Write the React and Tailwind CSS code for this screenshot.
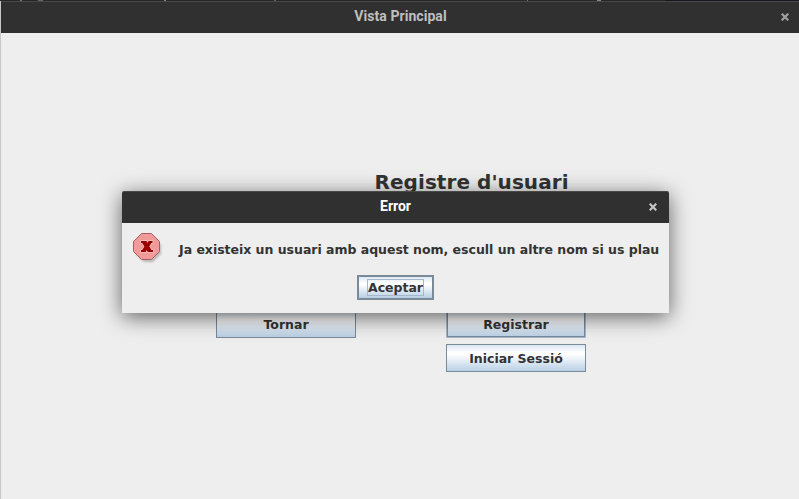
function CloseIcon({ className }) {
  return (
    <svg className={className} width="8" height="8" viewBox="0 0 8 8" fill="none" stroke="currentColor" strokeWidth="2.2">
      <path d="M0.7 0.7 7.3 7.3M7.3 0.7 0.7 7.3" />
    </svg>
  );
}

function ErrorIcon() {
  return (
    <svg width="32" height="32" viewBox="0 0 32 32" className="shrink-0">
      <path d="M12 5h9l8 8v9l-8 8h-9l-8-8v-9z" fill="#000" opacity="0.22" style={{ filter: "blur(1.2px)" }} />
      <path d="M9.500 1.500h10l8 8v10l-8 8h-10l-8-8v-10z" fill="#f19a9a" stroke="#a65f61" />
      <path
        d="M9 9h5.500l1 2 1-2H20.500v2H19.300L17.300 14.500l2.200 3.500H21v2H15.800l-1.100-2-1.100 2H9v-2h1.200l2.200-3.500L10.200 11H9z"
        fill="#990000"
        stroke="#ffc4c4"
        strokeWidth="1.4"
        paintOrder="stroke"
      />
    </svg>
  );
}

function Button({ children, className = "border-[#7a8a99]" }) {
  return (
    <button
      className={`h-7 w-[140px] border bg-[linear-gradient(to_bottom,#dde8f3_0%,#ffffff_30%,#ffffff_36%,#b8cfe5_100%)] pt-0.5 text-[12.5px] leading-none ${className}`}
    >
      {children}
    </button>
  );
}

function TitleBar({ title, titleClass, closeClass, className = "" }) {
  return (
    <div className={`grid h-8 grid-cols-[1fr_auto_1fr] border-t border-[#484848] bg-[#303030] font-[Roboto] text-[14px] font-bold leading-[28px] ${className}`}>
      <span />
      <span className={titleClass}>{title}</span>
      <CloseIcon className={closeClass} />
    </div>
  );
}

export default function App() {
  return (
    <div className="relative h-[499px] w-[799px] overflow-hidden bg-[#eeeeee] font-['DejaVu_Sans',sans-serif] font-bold text-[#333333]">
      <div className="flex h-px bg-[#272727]">
        <i className="ml-5 w-0.5 bg-[#77736a]" />
        <i className="ml-4 w-[5px] bg-[#666]" />
        <i className="ml-[121px] w-0.5 bg-[#888]" />
        <i className="ml-[108px] w-0.5 bg-[#666]" />
        <i className="ml-[251px] w-px bg-[#777]" />
        <i className="ml-[69px] w-1 bg-[#888]" />
        <i className="ml-auto w-[134px] bg-[#15151f]" />
      </div>
      <div className="flex h-[498px] flex-col border-l border-[#c8c8c8]">
        <TitleBar title="Vista Principal" titleClass="pl-px text-[#bfbfbf] tracking-[0.05px]" closeClass="mr-[10px] mt-[11px] justify-self-end text-[#a0a0a0]" />
        <div className="pl-[373.5px] pt-[137px]">
          <h1 className="whitespace-nowrap text-[20px] leading-6 tracking-[0.06px]">Registre d'usuari</h1>
        </div>
        <div className="mt-[116px] flex gap-[90px] pl-[215px]">
          <Button>Tornar</Button>
          <Button className="border-[#a3b8cc] shadow-[inset_0_0_0_1px_#7a8a99]">Registrar</Button>
        </div>
        <div className="mt-1.5 pl-[445px]">
          <Button>Iniciar Sessió</Button>
        </div>
      </div>

      <div
        role="dialog"
        className="absolute left-[122px] top-[191px] h-[122px] w-[547px] rounded-t-[2px] bg-[#eeeeee] shadow-[0_4px_21px_0_rgba(0,0,0,0.6)]"
      >
        <TitleBar className="rounded-t-[2px]" title="Error" titleClass="text-white" closeClass="mr-3 mt-[11px] justify-self-end text-[#c4c4c4]" />
        <div className="flex items-center gap-[15px] pl-[10px] pt-[9px]">
          <ErrorIcon />
          <p className="whitespace-nowrap pt-1 text-[12.5px] leading-4 tracking-[-0.02px]">Ja existeix un usuari amb aquest nom, escull un altre nom si us plau</p>
        </div>
        <div className="mt-[11px] flex pl-[235px]">
          <button className="flex h-[25px] w-[77px] items-center justify-center border-2 border-[#7a8a99] bg-[linear-gradient(to_bottom,#dde8f3_0%,#ffffff_30%,#ffffff_36%,#b8cfe5_100%)] text-[12.5px]">
            <span className="flex h-[17px] w-[57px] items-center justify-center border border-[#a3b8cc] pt-px leading-none">Aceptar</span>
          </button>
        </div>
      </div>
    </div>
  );
}
